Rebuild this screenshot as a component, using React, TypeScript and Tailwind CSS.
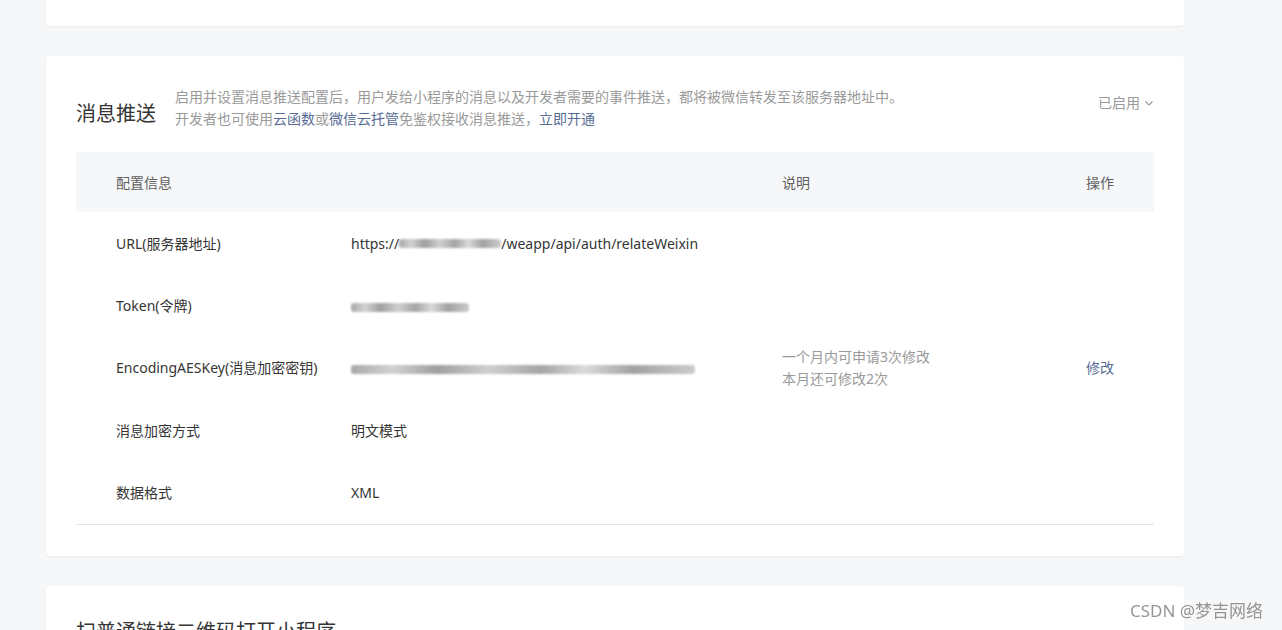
import React from "react";

const font = { fontFamily: '"Noto Sans", "Noto Sans CJK SC", sans-serif' };

function Blur({ w }: { w: number }) {
  return (
    <span className="inline-flex items-center align-middle" style={{ width: w, height: 12 }}>
      <span
        className="block h-[9px] w-full rounded-[3px] blur-[1.2px]"
        style={{
          background:
            "linear-gradient(90deg, #a9a9a9, #d2d2d2 12%, #9f9f9f 25%, #cfcfcf 40%, #a5a5a5 55%, #dadada 68%, #a2a2a2 82%, #cccccc)",
        }}
      />
    </span>
  );
}

export default function App() {
  const rows: { label: string; value: React.ReactNode; desc?: React.ReactNode; op?: string }[] = [
    {
      label: "URL(服务器地址)",
      value: (
        <span className="inline-flex items-center">
          https://
          <Blur w={102} />
          /weapp/api/auth/relateWeixin
        </span>
      ),
    },
    { label: "Token(令牌)", value: <Blur w={118} /> },
    {
      label: "EncodingAESKey(消息加密密钥)",
      value: <Blur w={344} />,
      desc: (
        <div className="leading-[22px] text-[14px] text-[#9a9a9a]">
          <div>一个月内可申请3次修改</div>
          <div>本月还可修改2次</div>
        </div>
      ),
      op: "修改",
    },
    { label: "消息加密方式", value: "明文模式" },
    { label: "数据格式", value: "XML" },
  ];

  return (
    <div className="min-h-[630px] h-[630px] overflow-hidden bg-[#f6f7f9] relative" style={font}>
      <div className="mx-[46px] w-[1138px]">
        <div className="h-[26px] bg-white rounded-b-[4px] shadow-[0_1px_2px_rgba(0,0,0,0.06)]" />

        <div className="mt-[30px] bg-white rounded-[4px] shadow-[0_1px_2px_rgba(0,0,0,0.06)] px-[30px] pt-[30px] pb-[31px]">
          <div className="flex items-start justify-between">
            <div className="flex items-end">
              <div className="text-[20px] leading-[28px] text-[#353535] mr-[19px] mb-[2px]">消息推送</div>
              <div className="text-[14px] leading-[22px] text-[#9a9a9a]">
                <div>启用并设置消息推送配置后，用户发给小程序的消息以及开发者需要的事件推送，都将被微信转发至该服务器地址中。</div>
                <div>
                  开发者也可使用<span className="text-[#576b95]">云函数</span>或
                  <span className="text-[#576b95]">微信云托管</span>免鉴权接收消息推送，
                  <span className="text-[#576b95]">立即开通</span>
                </div>
              </div>
            </div>
            <div className="flex items-center mt-[6px] text-[14px] leading-[22px] text-[#9a9a9a]">
              已启用
              <svg className="ml-[4px]" width="10" height="10" viewBox="0 0 10 10" fill="none">
                <path d="M1.5 3.5 L5 7 L8.5 3.5" stroke="#9a9a9a" strokeWidth="1.2" />
              </svg>
            </div>
          </div>

          <div className="mt-[22px] text-[14px]">
            <div className="grid grid-cols-[275px_431px_304px_68px] h-[60px] items-center bg-[#f6f7f9] text-[14px] text-[#5f5f5f]">
              <div className="pl-[40px]">配置信息</div>
              <div />
              <div>说明</div>
              <div>操作</div>
            </div>
            {rows.map((r) => (
              <div
                key={r.label}
                className="grid grid-cols-[275px_431px_304px_68px] h-[62.4px] items-center text-[#353535]"
              >
                <div className="pl-[40px] text-[14px]">{r.label}</div>
                <div className="text-[14px]">{r.value}</div>
                <div>{r.desc}</div>
                <div className="text-[14px] text-[#576b95]">{r.op}</div>
              </div>
            ))}
            <div className="border-t border-[#e4e4e4]" />
          </div>
        </div>

        <div className="mt-[30px] bg-white rounded-t-[4px] shadow-[0_1px_2px_rgba(0,0,0,0.06)] px-[30px] pt-[32px] h-[100px]">
          <div className="text-[20px] leading-[28px] text-[#353535]">扫普通链接二维码打开小程序</div>
        </div>
      </div>

      <div className="absolute left-[1130px] top-[600px] text-[17px] leading-[22px] text-[#8a8a8a] opacity-90 whitespace-nowrap">
        CSDN @梦吉网络
      </div>
    </div>
  );
}
